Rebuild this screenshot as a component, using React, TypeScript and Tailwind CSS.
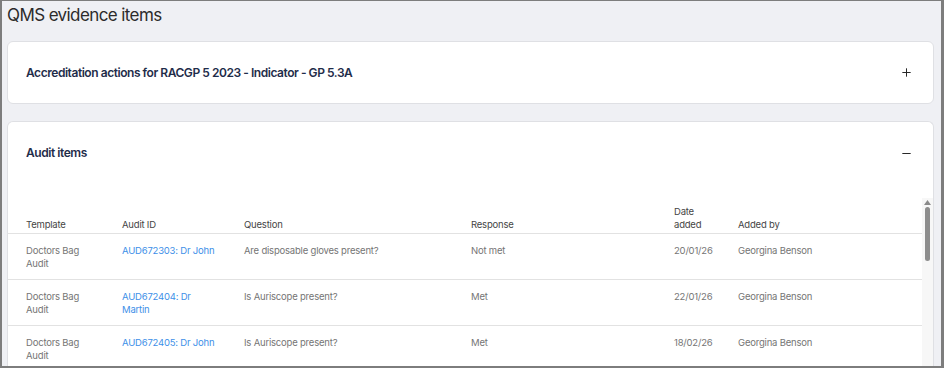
import { Plus, Minus } from 'lucide-react';

type Row = {
  template: string;
  auditId: string;
  question: string;
  response: string;
  dateAdded: string;
  addedBy: string;
};

const rows: Row[] = [
  { template: 'Doctors Bag Audit', auditId: 'AUD672303: Dr John', question: 'Are disposable gloves present?', response: 'Not met', dateAdded: '20/01/26', addedBy: 'Georgina Benson' },
  { template: 'Doctors Bag Audit', auditId: 'AUD672404: Dr Martin', question: 'Is Auriscope present?', response: 'Met', dateAdded: '22/01/26', addedBy: 'Georgina Benson' },
  { template: 'Doctors Bag Audit', auditId: 'AUD672405: Dr John', question: 'Is Auriscope present?', response: 'Met', dateAdded: '18/02/26', addedBy: 'Georgina Benson' },
];

const cols = 'grid grid-cols-[96px_122px_227px_203px_64px_1fr]';

export default function App() {
  return (
    <div className="h-[368px] w-[944px] overflow-hidden bg-[#7d7d7d] pl-[2px] pt-px pr-[3px] pb-[2px] font-['Inter',sans-serif]">
      <div className="flex h-full flex-col overflow-hidden bg-[#eff0f4] pl-[5px] pr-[7px]">
        <h1 className="pt-[1px] text-[17px] leading-[26px] tracking-[-0.6px] text-[#2b2b2b]">QMS evidence items</h1>

        <div className="mt-[13px] flex h-[63px] items-center justify-between rounded-md border border-[#dfe0e4] bg-white pl-[18px] pr-[20px]">
          <span className="text-[12px] font-semibold tracking-[-0.45px] text-[#1f2d4a]">
            Accreditation actions for RACGP 5 2023 - Indicator - GP 5.3A
          </span>
          <Plus size={13} strokeWidth={1.8} className="text-[#222]" />
        </div>

        <div className="mt-[17px] flex min-h-0 flex-1 flex-col rounded-t-md border border-b-0 border-[#dfe0e4] bg-white">
          <div className="flex h-[62px] shrink-0 items-center justify-between pl-[18px] pr-[20px]">
            <span className="text-[12px] font-semibold tracking-[-0.45px] text-[#1f2d4a]">Audit items</span>
            <Minus size={13} strokeWidth={1.8} className="text-[#222]" />
          </div>

          <div className="flex min-h-0 flex-1 pt-[14px]">
            <div className="flex-1 text-[9.5px] leading-[13px] tracking-[-0.2px]">
              <div className={`${cols} border-b border-[#e2e2e2] pb-[2px] pl-[18px] pt-[7px] text-[#454545]`}>
                <div className="self-end">Template</div>
                <div className="self-end">Audit ID</div>
                <div className="self-end">Question</div>
                <div className="self-end">Response</div>
                <div className="self-end">Date<br />added</div>
                <div className="self-end">Added by</div>
              </div>
              {rows.map((r) => (
                <div key={r.auditId} className={`${cols} h-[46px] border-b border-[#e2e2e2] pl-[18px] pt-[10px] text-[#757575]`}>
                  <div className="pr-[28px]">{r.template}</div>
                  <div className="pr-[28px] text-[#3d8fe8]">{r.auditId}</div>
                  <div className="pr-[28px]">{r.question}</div>
                  <div className="pr-[28px]">{r.response}</div>
                  <div>{r.dateAdded}</div>
                  <div>{r.addedBy}</div>
                </div>
              ))}
            </div>
            <div className="flex w-[11px] flex-col items-center bg-[#f7f7f7] pt-[2px]">
              <svg width="7" height="5" viewBox="0 0 7 5" className="fill-[#8a8a8a]">
                <path d="M3.5 0 L7 5 L0 5 Z" />
              </svg>
              <div className="mt-[2px] h-[54px] w-[5px] rounded-full bg-[#8d8d8d]" />
            </div>
          </div>
        </div>
      </div>
    </div>
  );
}
